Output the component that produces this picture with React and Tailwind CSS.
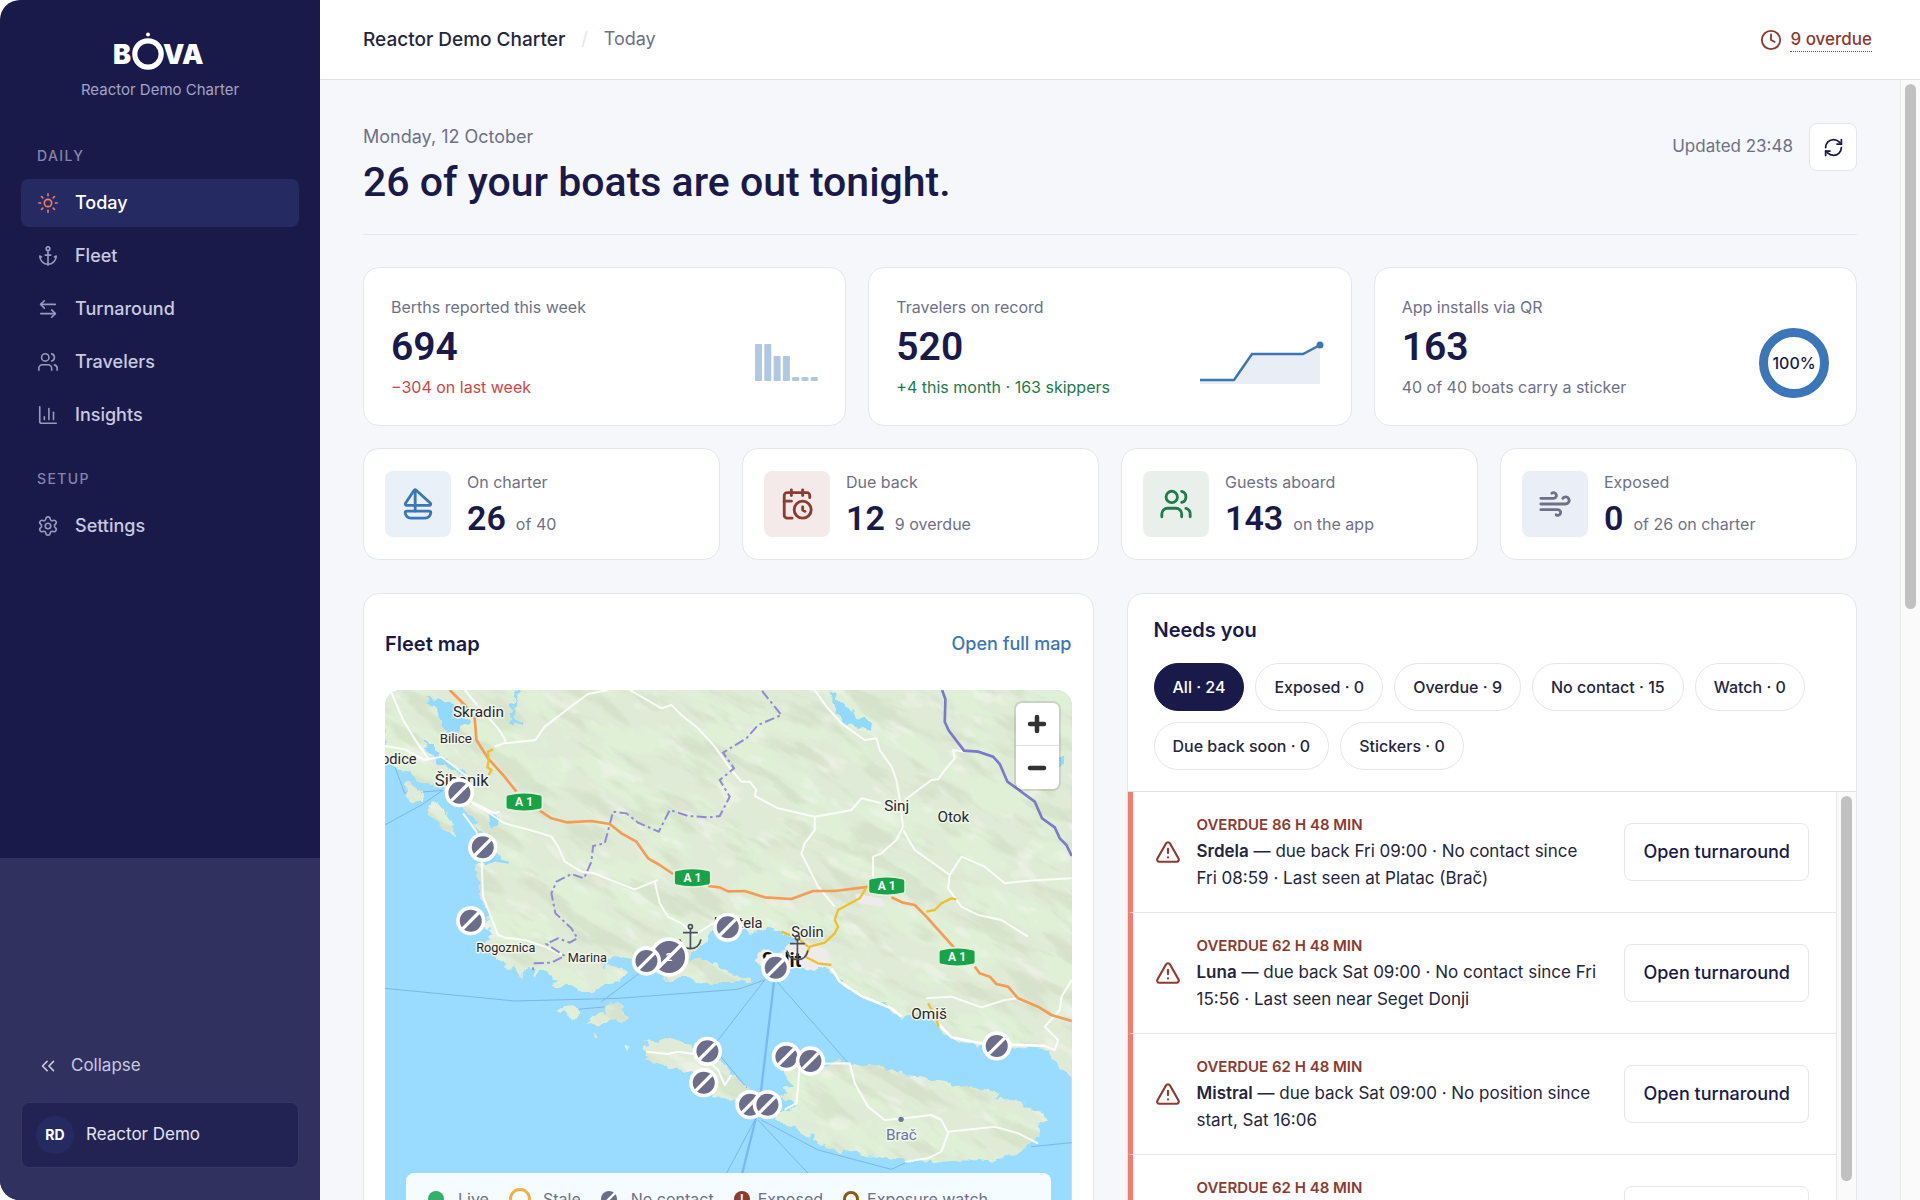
import {
  Anchor, ArrowLeftRight, CalendarClock, ChartColumn, ChevronsLeft, Clock, Minus, Plus,
  RefreshCw, Sailboat, Settings, Sun, TriangleAlert, Users, Wind,
} from "lucide-react";

const DAILY = [
  { label: "Today", icon: Sun, active: true },
  { label: "Fleet", icon: Anchor },
  { label: "Turnaround", icon: ArrowLeftRight },
  { label: "Travelers", icon: Users },
  { label: "Insights", icon: ChartColumn },
];

const TILES = [
  { label: "On charter", value: "26", note: "of 40", icon: Sailboat, tone: "bg-[#eaf0f8] text-[#3b76b8]" },
  { label: "Due back", value: "12", note: "9 overdue", icon: CalendarClock, tone: "bg-[#f3eae9] text-[#8e3a2e]" },
  { label: "Guests aboard", value: "143", note: "on the app", icon: Users, tone: "bg-[#e9f0eb] text-[#217a4b]" },
  { label: "Exposed", value: "0", note: "of 26 on charter", icon: Wind, tone: "bg-[#e9eef7] text-[#6e7086]" },
];

const FILTERS = ["All · 24", "Exposed · 0", "Overdue · 9", "No contact · 15", "Watch · 0", "Due back soon · 0", "Stickers · 0"];

const ALERTS = [
  { late: "Overdue 86 h 48 min", boat: "Srdela", text: "due back Fri 09:00 · No contact since Fri\u00a008:59 · Last seen at Platac (Brač)" },
  { late: "Overdue 62 h 48 min", boat: "Luna", text: "due back Sat 09:00 · No contact since Fri 15:56 · Last seen near Seget Donji" },
  { late: "Overdue 62 h 48 min", boat: "Mistral", text: "due back Sat 09:00 · No position since start, Sat 16:06" },
  { late: "Overdue 62 h 48 min", boat: "Bura", text: "due back Sat 09:00 · No position since start, Sat 16:10" },
];

function Logo() {
  return (
    <svg viewBox="0 0 96 40" className="h-10 w-24" role="img" aria-label="BOVA">
      <g fill="#fff" fontFamily="Inter" fontWeight="900" fontSize="27">
        <text x="1" y="32">B</text>
        <text x="51" y="32">VA</text>
      </g>
      <circle cx="36" cy="22" r="13.2" fill="none" stroke="#fff" strokeWidth="5.2" />
      <circle cx="36" cy="2.5" r="2" fill="#fff" />
    </svg>
  );
}

function NavItem({ label, icon: Icon, active }) {
  return (
    <a
      href="#"
      aria-current={active ? "page" : undefined}
      className={`flex h-12 items-center gap-4 rounded-lg px-4 text-lg font-medium ${active ? "bg-[#262a63] text-white" : "text-[#c9c9e0]"}`}
    >
      <Icon size={22} strokeWidth={1.75} className={active ? "text-[#f47b6e]" : "text-[#9a9ac0]"} />
      {label}
    </a>
  );
}

function Sidebar() {
  return (
    <aside className="flex w-80 shrink-0 flex-col overflow-hidden rounded-l-[20px] bg-[#1a1a4a]">
      <div className="flex flex-col items-center gap-2 pt-8">
        <Logo />
        <p className="text-[15px] leading-5 text-[#a4a4c6]">Reactor Demo Charter</p>
      </div>
      <nav className="flex flex-1 flex-col px-[21px] pt-12">
        <h2 className="px-4 text-sm leading-4 font-medium tracking-widest text-[#8585ad]">DAILY</h2>
        <div className="mt-[15px] flex flex-col gap-[5px]">
          {DAILY.map((item) => <NavItem key={item.label} {...item} />)}
        </div>
        <h2 className="mt-8 px-4 text-sm leading-4 font-medium tracking-widest text-[#8585ad]">SETUP</h2>
        <div className="mt-[15px]"><NavItem label="Settings" icon={Settings} /></div>
      </nav>
      <div className="flex h-[342px] flex-col justify-end gap-3 bg-[#31315f] px-[21px] pb-8">
        <button type="button" className="flex h-12 items-center gap-3 px-4 text-[17px] text-[#c9c9e0]">
          <ChevronsLeft size={22} strokeWidth={1.75} />
          Collapse
        </button>
        <button type="button" className="flex h-[66px] items-center gap-3 rounded-lg border border-[#36366b] bg-[#232353] px-[14px] text-[17px] text-[#e2e2f0]">
          <span className="flex size-[38px] items-center justify-center rounded-full bg-[#262a63] text-sm font-bold text-white">RD</span>
          Reactor Demo
        </button>
      </div>
    </aside>
  );
}

function Metric({ label, value, note, tone, children }) {
  return (
    <section className="flex h-[159px] items-center justify-between rounded-2xl border border-[#e4e6ee] bg-white px-[27px]">
      <div>
        <h2 className="text-base leading-6 text-[#6e7086]">{label}</h2>
        <p className="my-2 font-[Roboto] text-[39px] leading-10 font-semibold text-[#1a1a4a]">{value}</p>
        <p className={`text-base leading-6 ${tone}`}>{note}</p>
      </div>
      <div className="mt-8 flex h-[70px] items-center">{children}</div>
    </section>
  );
}

function Bars() {
  const heights = [37, 37, 25, 25, 4, 4, 4];
  return (
    <svg viewBox="0 0 63 40" className="h-10 w-[63px]" aria-hidden="true">
      {heights.map((h, i) => (
        <rect key={i} x={i * 9.3} y={38 - h} width="7" height={h} rx="0.8" fill="#b1c8e3" />
      ))}
    </svg>
  );
}

function Trend() {
  return (
    <svg viewBox="0 0 124 44" className="h-11 w-[124px]" aria-hidden="true">
      <path d="M0 39h34L52 13h51l17-9v39H0z" fill="#e8edf6" />
      <path d="M0 39h34L52 13h51l17-9" fill="none" stroke="#3b76b8" strokeWidth="2.5" />
      <circle cx="120" cy="4" r="3.5" fill="#3b76b8" />
    </svg>
  );
}

function Donut() {
  return (
    <div className="grid size-[70px] place-items-center rounded-full border-[9px] border-[#3b76b8] text-base font-medium text-[#1a1a4a]">100%</div>
  );
}

const MAINLAND =
  "M0 0V218L45 235 95 263 135 283 185 298 215 323 247 368 270 403 295 428 285 453 315 473 370 513 300 521 275 523 270 540 277 553 283 575 285 593 282 612 292 633 297 655 310 663 303 675 318 690 300 703 318 715 330 733 305 738 322 750 290 755 305 775 340 790 330 803 355 815 370 833 385 830 392 845 415 863 420 840 435 833 450 863 462 835 500 850 520 870 505 893 545 880 585 903 625 903 645 888 705 873 725 848 705 828 660 830 645 823 625 808 675 798 745 811 775 840 830 852 845 873 885 863 965 878 1075 880 1100 871 1045 853 1015 833 970 813 905 801 920 798 950 768 985 718 1065 718 1110 725 1150 716 1195 728 1240 743 1195 778 1135 782 1105 812 1125 823 1205 838 1335 833 1355 863 1390 890 1435 923 1480 932 1525 963 1550 985 1600 972 1655 1003 1675 1030 1705 1048 1750 1062 1795 1068 1850 1064 1905 1075 1980 1073 2010 1105 2030 1140 2100 1190V-40H-40V200Z";

const ISLANDS = [
  "M60 285 80 278 90 300 115 310 120 330 85 335 65 315Z",
  "M118 350 150 330 185 370 210 410 215 440 190 430 160 395 130 378Z",
  "M515 960 565 948 585 965 570 988 545 968Z",
  "M610 1000 640 970 665 970 672 940 715 945 725 985 705 1000 680 985 640 1010Z",
  "M625 1030 640 1030 645 1040 635 1042Z",
  "M717 1062 732 1070 728 1078 718 1078Z",
  "M775 1048 830 1052 865 1045 925 1068 985 1090 1030 1140 1075 1180 1100 1210 1130 1240 1110 1250 1050 1235 985 1213 960 1170 915 1148 865 1133 785 1113 800 1098 778 1088 788 1070Z",
  "M1195 1125 1245 1123 1305 1121 1385 1115 1425 1128 1505 1135 1560 1150 1605 1153 1640 1168 1685 1173 1720 1190 1760 1188 1850 1208 1825 1223 1905 1233 1925 1255 1970 1268 1990 1288 1960 1310 1965 1340 1940 1358 1900 1388 1835 1408 1705 1413 1645 1418 1605 1410 1565 1413 1505 1408 1430 1395 1355 1383 1310 1365 1285 1338 1245 1330 1230 1308 1165 1283 1185 1268 1235 1248 1185 1223 1205 1193 1235 1183 1200 1163Z",
];

const WATER = [
  "M120 15 150 30 160 28 185 40 215 55 222 75 262 95 250 105 225 100 218 135 200 130 185 125 175 105 165 85 150 50Z",
  "M105 150 130 165 150 165 155 190 172 205 190 215 235 245 260 265 250 270 205 240 165 220 135 190Z",
  "M392 0 400 0 396 40 385 60 390 98 420 95 415 105 380 108 365 100 382 90 375 62 390 35Z",
  "M312 370 335 385 345 390 335 405 318 412 308 395Z",
  "M1330 3 1350 5 1358 25 1372 38 1390 55 1420 80 1448 98 1465 108 1460 123 1430 115 1385 103 1358 70 1348 38Z",
  "M2022 202 2036 200 2034 225 2022 230Z",
];

const ROADS = [
  "M20 8 55 90 95 155 130 205 115 212M0 168 60 178 120 210 170 200 215 235 255 265",
  "M240 0 290 60 340 115 362 150 357 160 330 170M357 160 452 150 480 110 500 95 560 48 610 12 670 0",
  "M735 0 830 55 860 45 890 75 940 115 990 170 1015 205 1040 240 1070 275 1095 275 1115 300 1110 318 1180 355 1290 380 1350 370 1400 360 1430 325 1490 340",
  "M1290 0 1325 50 1370 100 1440 150 1475 145 1485 180 1520 230 1535 270 1545 330 1555 410 1535 450 1490 490 1465 500 1465 560",
  "M1555 420 1590 480 1660 530 1695 555 1690 595 1730 650 1780 675 1850 690 1930 740",
  "M1695 555 1730 500 1800 530 1860 580 1930 572 2061 565",
  "M1290 380 1290 420 1260 460 1250 490 1300 590 1350 650",
  "M1560 330 1600 300 1640 270 1660 268 1680 240 1710 205 1705 180 1740 185",
  "M250 330 330 370 345 365M262 340 300 360 360 400 470 430 500 440 520 470 540 515 590 545 630 550 690 575 750 598 820 570",
  "M810 575 825 640 850 680 890 700 930 735 1000 690",
  "M235 370 275 425 290 500 295 620 340 735 360 743 420 750 480 770 540 798",
  "M1625 925 1700 920 1790 952 1860 930 1900 925M2061 870 2030 920 2025 960 1980 1010 2020 1050 2010 1080 1980 1068",
  "M785 1085 850 1092 880 1085 950 1095 1000 1140 1020 1185 1040 1155",
  "M1300 1121 1395 1120 1410 1180 1450 1250 1500 1290 1560 1285 1640 1275 1670 1290 1690 1330 1670 1385 1630 1405 1560 1415M1690 1325 1830 1310 1900 1330 1960 1360",
  "M1245 1125 1240 1190 1235 1240 1200 1258",
];

const FERRIES =
  "M0 895 390 933 700 925 1060 898 1140 870M650 935 790 830M990 1063 1140 870M1172 870 1400 1130M575 958 670 950M1110 1290 1020 1460M1120 1290 1270 1450M1130 1290 1300 1380 1520 1438 1580 1410M1940 1370 2061 1358M1000 1090 1100 1210M0 405 110 345 190 290M30 230 60 310 190 300";

const PINS = [
  [224, 308], [294, 472], [258, 692], [1029, 712], [785, 813], [968, 1084], [957, 1178],
  [1173, 833], [1205, 1100], [1277, 1113], [1096, 1244], [1148, 1244], [1836, 1068],
];

const LABELS = [
  ["Skradin", 281, 80, 46], ["Bilice", 213, 158, 40], ["odice", 42, 222, 44], ["Šibenik", 231, 287, 50],
  ["Rogoznica", 363, 787, 38], ["Marina", 608, 817, 38], ["Kaštela", 1060, 715, 44], ["Solin", 1268, 742, 44],
  ["Sinj", 1536, 363, 46], ["Otok", 1706, 397, 46], ["Omiš", 1633, 988, 46],
];

function Pin({ x, y, r = 33 }) {
  return (
    <g transform={`translate(${x} ${y})`}>
      <circle r={r + 11} fill="#fff" />
      <circle r={r} fill="#6b6d89" />
      <path d={`M${-r * 0.72} ${r * 0.72}L${r * 0.72} ${-r * 0.72}`} stroke="#fff" strokeWidth="10" />
    </g>
  );
}

function HarbourMark({ x, y }) {
  return (
    <g transform={`translate(${x} ${y})`} fill="none" stroke="#4b4f57" strokeWidth="5" strokeLinecap="round">
      <circle cy="-32" r="6" />
      <path d="M0-24V34M-20-14H20M-31 8C-28 24-16 34 0 34S28 24 31 8" />
    </g>
  );
}

function FleetChart() {
  return (
    <svg viewBox="0 0 2061 1671" preserveAspectRatio="xMidYMin slice" className="size-full" role="img" aria-label="Map of the fleet around Split">
      <defs>
        <filter id="shore" x="0" y="0" width="100%" height="100%">
          <feTurbulence type="fractalNoise" baseFrequency="0.035" numOctaves="2" seed="3" result="n" />
          <feDisplacementMap in="SourceGraphic" in2="n" scale="34" xChannelSelector="R" yChannelSelector="G" />
        </filter>
        <mask id="land" maskUnits="userSpaceOnUse" x="0" y="0" width="2061" height="1671">
          <g fill="#fff" filter="url(#shore)">
            <path d={MAINLAND} />
            {ISLANDS.map((d) => <path key={d} d={d} />)}
          </g>
        </mask>
        <filter id="woods" x="0" y="0" width="100%" height="100%">
          <feTurbulence type="fractalNoise" baseFrequency="0.005 0.011" numOctaves="4" seed="8" />
          <feColorMatrix values="0 0 0 0 0.74  0 0 0 0 0.89  0 0 0 0 0.69  9 0 0 0 -4.3" />
        </filter>
        <filter id="ridges" x="0" y="0" width="100%" height="100%">
          <feTurbulence type="fractalNoise" baseFrequency="0.005 0.017" numOctaves="4" seed="21" />
          <feColorMatrix values="0 0 0 0 0.60  0 0 0 0 0.67  0 0 0 0 0.50  0 7 0 0 -3.7" />
        </filter>
        <filter id="slopes" x="0" y="0" width="100%" height="100%">
          <feTurbulence type="fractalNoise" baseFrequency="0.009 0.02" numOctaves="3" seed="4" />
          <feColorMatrix values="0 0 0 0 0.92  0 0 0 0 0.91  0 0 0 0 0.86  0 0 6 0 -3.6" />
        </filter>
      </defs>
      <rect width="2061" height="1671" fill="#9adcff" />
      <path d={FERRIES} fill="none" stroke="#7db4ee" strokeWidth="3" />
      <path d="M1172 840 1128 1210 1112 1290 1070 1460" fill="none" stroke="#79b8f8" strokeWidth="7" />
      <g mask="url(#land)">
        <rect width="2061" height="1671" fill="#dfebd6" />
        <g transform="rotate(30 1030 700)">
          <rect x="-500" y="-700" width="3100" height="2900" filter="url(#woods)" opacity="0.75" />
          <rect x="-500" y="-700" width="3100" height="2900" filter="url(#slopes)" opacity="0.5" />
          <rect x="-500" y="-700" width="3100" height="2900" filter="url(#ridges)" opacity="0.4" />
        </g>
        <path d="M1130 780 1240 745 1330 790 1340 835 1200 845 1105 815Z" fill="#eeecea" />
        <path d="M1410 610 1490 625 1500 650 1420 640Z" fill="#eeecea" />
      </g>
      <g fill="#93d8fd" filter="url(#shore)">{WATER.map((d) => <path key={d} d={d} />)}</g>
      <path d="M300 523 330 510 372 518" fill="none" stroke="#93d8fd" strokeWidth="7" />
      <g fill="none" stroke="#fff" strokeWidth="6" strokeLinejoin="round" opacity="0.85">
        {ROADS.map((d) => <path key={d} d={d} />)}
      </g>
      <path d="M1340 835 1365 875 1430 918 1520 955 1550 980M1660 1000 1700 1042 1790 1060 1980 1068" fill="none" stroke="#fff" strokeWidth="8" />
      <path d="M1132 3 1190 75 1120 105 1085 145 1015 188 1048 235 1005 270 1035 320 1005 378 975 382 910 378 855 360 822 425 760 398 725 370 685 365 660 460 625 468 620 515 598 565 560 552 515 575 500 610 512 670 560 715 578 745 555 758 520 745 485 762 540 798 500 818 450 820 442 845" fill="none" stroke="#8f8bd0" strokeWidth="6" strokeDasharray="30 10 8 10" />
      <path d="M1672 0 1682 28 1680 95 1692 122 1738 182 1780 185 1825 200 1845 222 1868 275 1950 335 1972 385 2010 412 2025 445 2045 465 2061 498" fill="none" stroke="#7b79cb" strokeWidth="8" />
      <g fill="none" stroke="#f79a55" strokeWidth="8" strokeLinejoin="round">
        <path d="M195 0 240 45 270 85 275 150 310 205 355 255 395 305" />
        <path d="M465 362 500 385 545 397 620 393 675 402 710 430 755 455 790 505 825 525 865 552" />
        <path d="M970 588 1005 592 1030 604 1080 603 1140 622 1220 627 1285 603 1350 603 1455 590" />
        <path d="M1520 622 1555 638 1590 645 1625 680 1665 725 1710 775" />
        <path d="M1770 830 1785 850 1815 860 1835 882 1870 890 1900 925 1960 950 2000 975 2061 993" />
      </g>
      <g fill="none" stroke="#eac12f" strokeWidth="7" strokeLinejoin="round">
        <path d="M1445 592 1425 625 1360 660 1350 690 1360 710 1350 730 1320 758 1275 770 1262 800 1300 820 1340 825M1190 725 1240 745 1270 770" />
        <path d="M1625 665 1650 660 1670 640 1700 625 1715 628M1630 940 1650 975 1662 1010M325 178 310 185 312 210 308 232 320 240 312 255" />
      </g>
      <g fontFamily="Roboto" textAnchor="middle" fill="#26282b" stroke="#f1f5ec" strokeWidth="9" strokeLinejoin="round" paintOrder="stroke">
        {LABELS.map(([name, x, y, size]) => <text key={name} x={x} y={y} fontSize={size}>{name}</text>)}
        <text x="1190" y="830" fontSize="58" fontWeight="700" fill="#111">Split</text>
        <text x="1550" y="1350" fontSize="46" fill="#64779c">Brač</text>
      </g>
      <circle cx="1549" cy="1288" r="8" fill="#64779c" />
      {[[418, 336], [923, 563], [1506, 588], [1717, 801]].map(([x, y]) => (
        <g key={x} transform={`translate(${x} ${y})`}>
          <path d="M-50-22Q0-34 50-22Q55-20 55-14V14Q55 20 50 22Q0 34-50 22Q-55 20-55 14V-14Q-55-20-50-22Z" fill="#18a349" stroke="#e4efdd" strokeWidth="5" />
          <text y="13" fontFamily="Roboto" fontWeight="700" fontSize="36" fill="#fff" textAnchor="middle">A 1</text>
        </g>
      ))}
      <HarbourMark x={917} y={742} />
      <HarbourMark x={1238} y={775} />
      <Pin x={853} y={801} r={48} />
      <text x="853" y="814" fontFamily="Roboto" fontWeight="700" fontSize="34" fill="#fff" textAnchor="middle">2</text>
      {PINS.map(([x, y]) => <Pin key={`${x}-${y}`} x={x} y={y} />)}
    </svg>
  );
}

function Legend() {
  return (
    <ul className="absolute inset-x-[21px] bottom-[22px] flex h-[52px] items-center gap-5 rounded-lg bg-white/90 px-[22px] text-base text-[#6e7086]">
      <li className="flex items-center gap-[14px]"><span className="size-4 rounded-full bg-[#35b068]" />Live</li>
      <li className="flex items-center gap-3"><span className="size-[22px] rounded-full border-[3px] border-[#f2b04a] bg-white" />Stale</li>
      <li className="flex items-center gap-[14px]">
        <svg viewBox="0 0 16 16" className="size-4" aria-hidden="true"><circle cx="8" cy="8" r="8" fill="#6b6d89" /><path d="M2 14 14 2" stroke="#fff" strokeWidth="2.4" /></svg>
        No contact
      </li>
      <li className="flex items-center gap-2"><span className="grid size-4 place-items-center rounded-full bg-[#8e3a2e] text-xs font-bold text-white">!</span>Exposed</li>
      <li className="flex items-center gap-2"><span className="size-4 rounded-full border-[3px] border-[#8a5a12] bg-white" />Exposure watch</li>
    </ul>
  );
}

function FleetMap() {
  return (
    <section className="flex flex-col rounded-2xl border border-[#e4e6ee] bg-white px-[21px] pt-8">
      <header className="flex h-9 items-center justify-between">
        <h2 className="text-xl font-semibold text-[#1a1a4a]">Fleet map</h2>
        <a href="#" className="text-lg font-medium text-[#3b76b8]">Open full map</a>
      </header>
      <div className="relative mt-7 h-[557px] overflow-hidden rounded-t-2xl">
        <FleetChart />
        <div className="absolute top-[13px] right-[13px] flex w-[43px] flex-col divide-y divide-[#dddddd] rounded-md bg-white shadow-[0_0_0_2px_rgba(0,0,0,0.1)]">
          <button type="button" aria-label="Zoom in" className="grid h-[43px] place-items-center text-[#333333]"><Plus size={24} strokeWidth={4.5} /></button>
          <button type="button" aria-label="Zoom out" className="grid h-[43px] place-items-center text-[#333333]"><Minus size={24} strokeWidth={4.5} /></button>
        </div>
        <Legend />
      </div>
    </section>
  );
}

function NeedsYou() {
  return (
    <section className="flex flex-col overflow-hidden rounded-2xl border border-[#e4e6ee] bg-white">
      <header className="px-[26px] pt-[22px] pb-[21px]">
        <h2 className="text-xl leading-7 font-semibold text-[#1a1a4a]">Needs you</h2>
        <div className="mt-[19px] flex flex-wrap gap-[11px]">
          {FILTERS.map((name, i) => (
            <button
              key={name}
              type="button"
              aria-pressed={i === 0}
              className={`h-12 rounded-full border px-[18px] text-base font-medium ${i === 0 ? "border-[#1a1a4a] bg-[#1a1a4a] text-white" : "border-[#e4e6ee] bg-white text-[#25263c]"}`}
            >
              {name}
            </button>
          ))}
        </div>
      </header>
      <div className="flex border-t border-[#e1e2e8]">
        <ul className="min-w-0 flex-1">
          {ALERTS.map((a) => (
            <li key={a.boat} className="flex h-[121px] items-center gap-4 border-b border-l-[5px] border-b-[#e4e6ee] border-l-[#f47b6e] pr-[27px] pl-[22px]">
              <TriangleAlert size={26} strokeWidth={2} className="shrink-0 text-[#8e3a2e]" />
              <div className="min-w-0 flex-1">
                <p className="text-[15px] leading-[26px] font-semibold text-[#8e3a2e] uppercase">{a.late}</p>
                <p className="text-[17px] leading-[27px] text-[#25263c]"><strong className="font-semibold">{a.boat}</strong> — {a.text}</p>
              </div>
              <button type="button" className="h-[58px] shrink-0 rounded-lg border border-[#e4e6ee] px-[18px] text-lg font-medium text-[#1a1a4a]">Open turnaround</button>
            </li>
          ))}
        </ul>
        <div className="w-5 border-l border-[#e8e8e8] bg-[#fafafa] px-1 pt-1" aria-hidden="true">
          <div className="h-[385px] rounded-full bg-[#c1c1c1]" />
        </div>
      </div>
    </section>
  );
}

export default function App() {
  return (
    <div className="flex h-screen overflow-hidden bg-white font-[Inter,sans-serif]">
      <Sidebar />
      <div className="flex min-w-0 flex-1 flex-col">
        <header className="flex h-20 shrink-0 items-center justify-between border-b border-[#dfe0e5] pr-12 pl-[43px]">
          <nav aria-label="Breadcrumb" className="flex items-center gap-4 text-lg">
            <span className="text-[19px] font-medium text-[#25263c]">Reactor Demo Charter</span>
            <span className="text-[#e4e6ee]">/</span>
            <span className="text-[#6e7086]">Today</span>
          </nav>
          <a href="#" className="flex items-center gap-2 text-[17px] leading-6 font-medium text-[#8e3a2e]">
            <Clock size={22} strokeWidth={2} />
            <span className="block border-b border-dotted border-[#8e3a2e]">9 overdue</span>
          </a>
        </header>
        <div className="flex min-h-0 flex-1">
          <main className="min-w-0 flex-1 overflow-hidden bg-[#f5f7fb] px-[43px] pt-[43px]">
            <div className="flex items-start justify-between border-b border-[#e6e8ef] pb-[29px]">
              <div>
                <p className="text-lg leading-7 text-[#6e7086]">Monday, 12 October</p>
                <h1 className="mt-2 font-[Roboto] text-[41px] leading-[46px] font-medium text-[#1a1a4a]">26 of your boats are out tonight.</h1>
              </div>
              <div className="flex items-center gap-4 text-[17px] text-[#6e7086]">
                Updated 23:48
                <button type="button" aria-label="Refresh" className="grid size-12 place-items-center rounded-lg border border-[#e4e6ee] bg-white text-[#1a1a4a]">
                  <RefreshCw size={21} strokeWidth={2} />
                </button>
              </div>
            </div>
            <div className="mt-8 grid grid-cols-3 gap-[22px]">
              <Metric label="Berths reported this week" value="694" note="−304 on last week" tone="text-[#d24545]"><Bars /></Metric>
              <Metric label="Travelers on record" value="520" note="+4 this month · 163 skippers" tone="text-[#217a4b]"><Trend /></Metric>
              <Metric label="App installs via QR" value="163" note="40 of 40 boats carry a sticker" tone="text-[#6e7086]"><Donut /></Metric>
            </div>
            <div className="mt-[22px] grid grid-cols-4 gap-[22px]">
              {TILES.map(({ label, value, note, icon: Icon, tone }) => (
                <section key={label} className="flex h-28 items-center gap-4 rounded-2xl border border-[#e4e6ee] bg-white px-[21px]">
                  <div className={`grid size-[66px] shrink-0 place-items-center rounded-lg ${tone}`}><Icon size={34} strokeWidth={2} /></div>
                  <div>
                    <h2 className="text-base leading-6 text-[#6e7086]">{label}</h2>
                    <p className="mt-1 flex items-baseline gap-[10px] text-base text-[#6e7086]">
                      <span className="font-[Roboto] text-[34px] leading-10 font-semibold text-[#1a1a4a]">{value}</span>
                      {note}
                    </p>
                  </div>
                </section>
              ))}
            </div>
            <div className="mt-[33px] grid grid-cols-2 items-start gap-[33px]">
              <FleetMap />
              <NeedsYou />
            </div>
          </main>
          <div className="w-5 shrink-0 border-l border-[#e8e8e8] bg-[#fafafa] px-1 pt-1" aria-hidden="true">
            <div className="h-[525px] rounded-full bg-[#c1c1c1]" />
          </div>
        </div>
      </div>
    </div>
  );
}
